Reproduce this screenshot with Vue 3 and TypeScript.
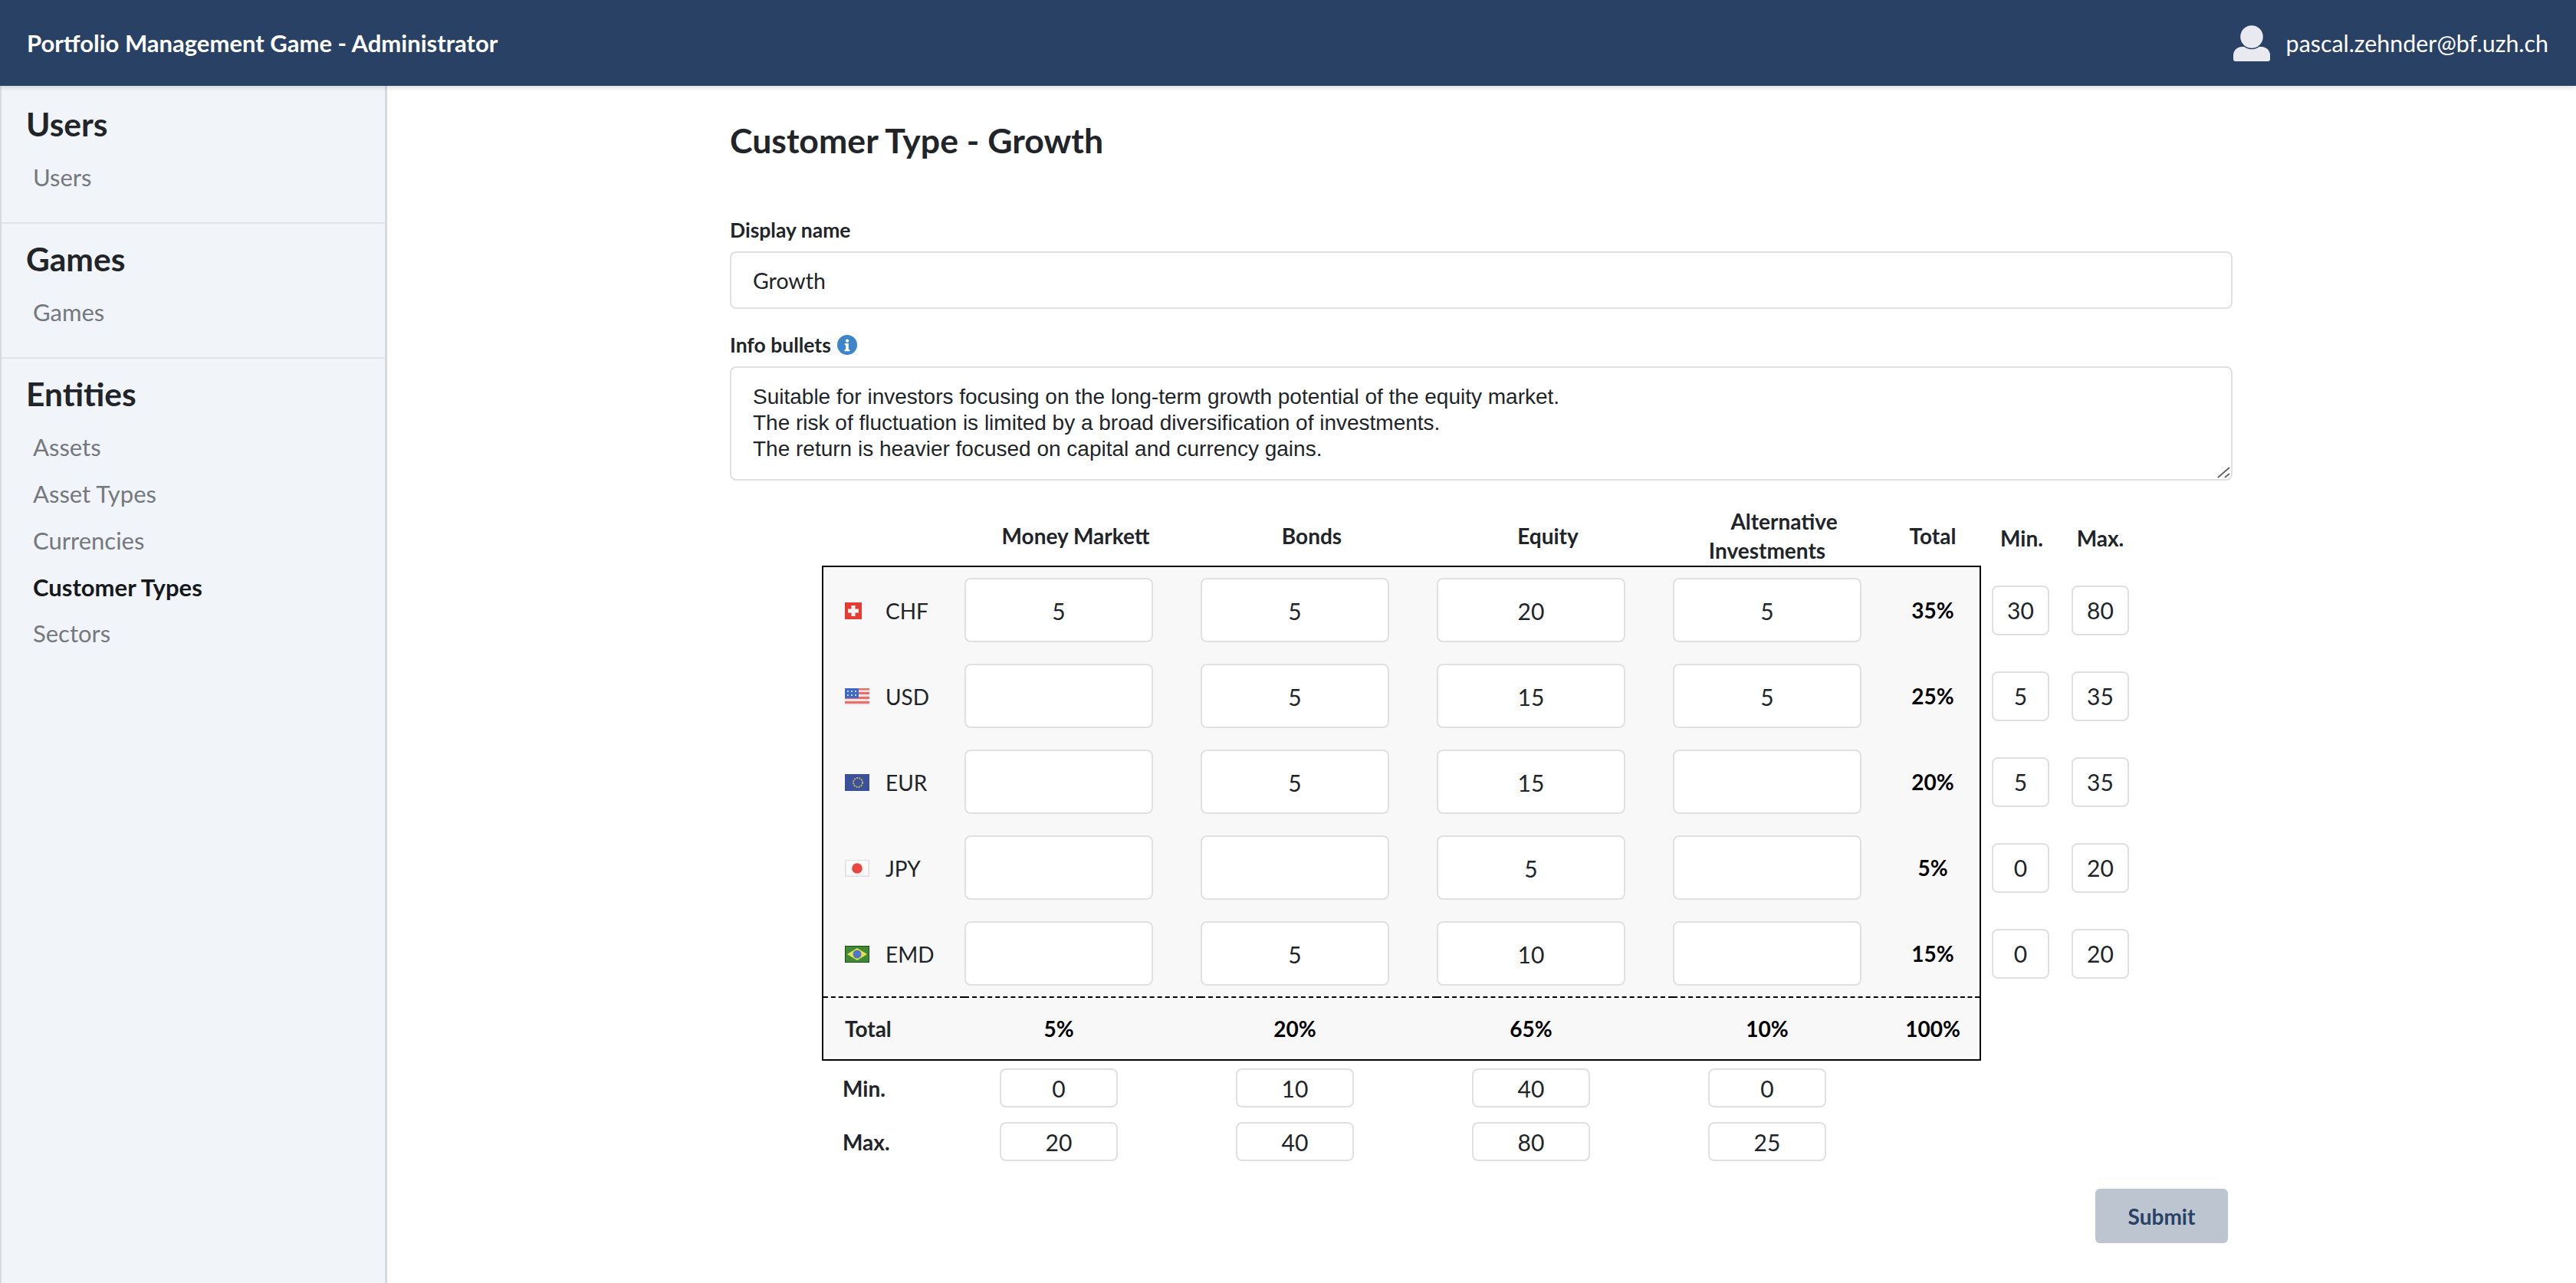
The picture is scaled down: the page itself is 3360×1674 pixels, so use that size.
<template>
  <div class="page">
    <header class="topbar">
      <div class="brand">Portfolio Management Game - Administrator</div>
      <div class="account">
        <svg class="user-icon" viewBox="0 0 48 48">
          <path d="M11 29h26c6 0 11 5 11 11v5a3 3 0 0 1-3 3H3a3 3 0 0 1-3-3v-5c0-6 5-11 11-11z" fill="#e8eaef" />
          <circle cx="24" cy="16" r="15.5" fill="#e8eaef" stroke="#284165" stroke-width="1.5" />
        </svg>
        <span>pascal.zehnder@bf.uzh.ch</span>
      </div>
    </header>

    <div class="body">
      <aside class="sidebar">
        <section v-for="group in nav" :key="group.title" class="nav-group">
          <h3>{{ group.title }}</h3>
          <a v-for="item in group.items" :key="item" :class="['nav-item', { active: item === 'Customer Types' }]">{{ item }}</a>
        </section>
      </aside>

      <main class="main">
        <form class="form" @submit.prevent>
          <h2 class="title">Customer Type - Growth</h2>

          <label class="field-label">Display name</label>
          <input class="text-input" type="text" value="Growth" />

          <label class="field-label second">
            Info bullets
            <svg class="info-icon" viewBox="0 0 26 26">
              <circle cx="13" cy="13" r="13" fill="#3d85cb" />
              <circle cx="13" cy="7.6" r="2.2" fill="#fff" />
              <path d="M9.800 11h5v8h1.600v2.200H9.600V19h1.600v-5.800H9.800z" fill="#fff" />
            </svg>
          </label>
          <div class="bullets-wrap">
            <textarea class="bullets" :value="bullets" rows="3"></textarea>
            <svg class="grip" width="20" height="20" viewBox="0 0 20 20">
              <path d="M3 18L18 5M12 18l6-5" stroke="#666" stroke-width="2" fill="none" />
            </svg>
          </div>

          <div class="matrix">
            <div class="matrix-head">
              <div></div>
              <div v-for="col in columns" :key="col" class="head-cell">{{ col }}</div>
              <div class="head-cell alt">
                <span>Alternative</span>
                <span class="alt-second">Investments</span>
              </div>
              <div class="head-cell">Total</div>
              <div class="head-cell min-head">Min.</div>
              <div class="head-cell max-head">Max.</div>
            </div>

            <div class="matrix-body">
              <div class="box">
                <div v-for="row in rows" :key="row.code" class="box-row">
                  <div class="currency">
                    <span class="flag-slot">
                      <svg v-if="row.code === 'CHF'" class="flag" width="22" height="22" viewBox="0 0 22 22">
                        <rect width="22" height="22" fill="#e53b35" />
                        <path d="M8.500 4h5v4.500H18v5h-4.500V18h-5v-4.500H4v-5h4.500z" fill="#fbf3f2" />
                      </svg>
                      <svg v-else-if="row.code === 'USD'" class="flag" width="32" height="22" viewBox="0 0 32 22">
                        <rect width="32" height="22" fill="#f4e4e2" />
                        <path d="M0 0h32v2.500H0zM0 5h32v3H0zM0 11h32v3H0zM0 17h32v3H0z" fill="#e8706c" />
                        <rect width="18" height="13" fill="#3f68c8" />
                        <path d="M3 3h2v2H3zM8 3h2v2H8zM13 3h2v2h-2zM3 8h2v2H3zM8 8h2v2H8zM13 8h2v2h-2z" fill="#c9d8f2" />
                      </svg>
                      <svg v-else-if="row.code === 'EUR'" class="flag" width="32" height="22" viewBox="0 0 32 22">
                        <rect width="32" height="22" fill="#3b5199" />
                        <circle cx="17" cy="11" r="6" fill="none" stroke="#c9b45c" stroke-width="2" stroke-dasharray="2 1.2" />
                      </svg>
                      <svg v-else-if="row.code === 'JPY'" class="flag" width="32" height="22" viewBox="0 0 32 22">
                        <rect width="32" height="22" fill="#dedede" />
                        <rect x="1.500" y="1" width="29" height="19.500" fill="#fbf9f9" />
                        <circle cx="16" cy="11" r="6.800" fill="#ea4541" />
                      </svg>
                      <svg v-else class="flag" width="32" height="22" viewBox="0 0 32 22">
                        <rect width="32" height="22" fill="#1d4d17" />
                        <rect x="1" y="1" width="30" height="20" fill="#3f8a36" />
                        <path d="M16 3l13 8-13 8-13-8z" fill="#e9de4e" />
                        <circle cx="16" cy="11" r="5.500" fill="#4d76c9" />
                      </svg>
                    </span>
                    {{ row.code }}
                  </div>
                  <div v-for="(val, i) in row.values" :key="i">
                    <input class="cell-input" type="text" :value="val" />
                  </div>
                  <div class="sum">{{ row.total }}</div>
                </div>
                <div class="box-row total-row">
                  <div class="total-label">Total</div>
                  <div v-for="t in colTotals" :key="t" class="col-total">{{ t }}</div>
                  <div class="grand-total">100%</div>
                </div>
              </div>

              <div class="limits">
                <div v-for="row in rows" :key="row.code" class="limit-row">
                  <input class="limit-input" type="text" :value="row.min" />
                  <input class="limit-input" type="text" :value="row.max" />
                </div>
              </div>
            </div>

            <div v-for="b in bounds" :key="b.label" class="bound-row">
              <div class="bound-label">{{ b.label }}</div>
              <div v-for="(v, i) in b.values" :key="i">
                <input class="bound-input" type="text" :value="v" />
              </div>
            </div>
          </div>

          <div class="actions">
            <button class="submit" type="submit">Submit</button>
          </div>
        </form>
      </main>
    </div>
  </div>
</template>

<script setup lang="ts">
interface Row {
  code: string;
  values: string[];
  total: string;
  min: string;
  max: string;
}

const nav = [
  { title: 'Users', items: ['Users'] },
  { title: 'Games', items: ['Games'] },
  { title: 'Entities', items: ['Assets', 'Asset Types', 'Currencies', 'Customer Types', 'Sectors'] },
];

const bullets = [
  'Suitable for investors focusing on the long-term growth potential of the equity market.',
  'The risk of fluctuation is limited by a broad diversification of investments.',
  'The return is heavier focused on capital and currency gains.',
].join('\n');

const columns = ['Money Markett', 'Bonds', 'Equity'];

const rows: Row[] = [
  { code: 'CHF', values: ['5', '5', '20', '5'], total: '35%', min: '30', max: '80' },
  { code: 'USD', values: ['', '5', '15', '5'], total: '25%', min: '5', max: '35' },
  { code: 'EUR', values: ['', '5', '15', ''], total: '20%', min: '5', max: '35' },
  { code: 'JPY', values: ['', '', '5', ''], total: '5%', min: '0', max: '20' },
  { code: 'EMD', values: ['', '5', '10', ''], total: '15%', min: '0', max: '20' },
];

const colTotals = ['5%', '20%', '65%', '10%'];

const bounds = [
  { label: 'Min.', values: ['0', '10', '40', '0'] },
  { label: 'Max.', values: ['20', '40', '80', '25'] },
];
</script>

<style>
html,
body {
  margin: 0;
  background: #fff;
}
</style>

<style scoped>
.page {
  height: 1674px;
  display: flex;
  flex-direction: column;
  overflow: hidden;
  font-family: Lato, "Open Sans", sans-serif;
  font-size: 28px;
  color: #212529;
}

.topbar {
  height: 112px;
  flex: none;
  display: flex;
  align-items: center;
  justify-content: space-between;
  padding: 0 36px 0 35px;
  background: #284165;
  color: #fff;
  box-shadow: 0 2px 6px rgba(0, 0, 0, 0.15);
  position: relative;
  z-index: 1;
}

.brand {
  font-size: 31px;
  font-weight: 700;
}

.account {
  display: flex;
  align-items: center;
  gap: 21px;
  font-size: 30.4px;
}

.user-icon {
  width: 48px;
  height: 48px;
}

.body {
  flex: 1;
  display: flex;
  min-height: 0;
}

.sidebar {
  width: 505px;
  flex: none;
  box-sizing: border-box;
  background: #f1f4f9;
  border-left: 2px solid #d5d9e0;
  border-right: 3px solid #d5d9e0;
}

.nav-group {
  padding: 22px 0 28.5px 32px;
  border-bottom: 2px solid #dfe3ea;
}

.nav-group:first-child {
  padding-top: 26px;
}

.nav-group:last-child {
  border-bottom: 0;
}

.nav-group h3 {
  margin: 0 0 15px;
  font-size: 42.5px;
  line-height: 48px;
  font-weight: 700;
}

.nav-item {
  display: block;
  margin-left: 9px;
  font-size: 31px;
  line-height: 60.7px;
  color: #75797e;
}

.nav-item.active {
  color: #16191c;
  font-weight: 700;
}

.main {
  flex: 1;
  padding-left: 447px;
}

.form {
  width: 1960px;
}

.title {
  margin: 43px 0 72px;
  font-size: 44.6px;
  line-height: 56px;
  font-weight: 700;
}

.field-label {
  display: flex;
  align-items: center;
  gap: 8px;
  height: 34px;
  margin-bottom: 11px;
  font-size: 26.5px;
  font-weight: 700;
}

.field-label.second {
  margin-top: 30px;
}

.info-icon {
  width: 26px;
  height: 26px;
}

.text-input {
  display: block;
  width: 100%;
  height: 75px;
  box-sizing: border-box;
  padding: 0 28px;
  border: 2px solid #e0e0e0;
  border-radius: 8px;
  font: inherit;
  font-size: 28.5px;
  color: #212529;
}

.bullets-wrap {
  position: relative;
}

.bullets {
  display: block;
  width: 100%;
  height: 149px;
  box-sizing: border-box;
  padding: 21px 28px;
  border: 2px solid #e0e0e0;
  border-radius: 8px;
  resize: none;
  font-family: "Liberation Sans", Arial, sans-serif;
  font-size: 28px;
  line-height: 34px;
  color: #212529;
}

.grip {
  position: absolute;
  right: 2px;
  bottom: 2px;
  pointer-events: none;
}

.matrix {
  margin-top: 34px;
  margin-left: 120px;
}

.matrix-head {
  height: 77px;
  display: grid;
  grid-template-columns: 177px 308px 308px 308px 308px 80px 112px 104px;
  align-items: center;
  font-weight: 700;
}

.head-cell {
  padding-bottom: 6px;
  text-align: center;
  line-height: 38px;
}

.alt span {
  display: block;
}

.alt .alt-second {
  padding-right: 44px;
}

.min-head {
  padding-bottom: 0;
  padding-left: 40px;
}

.max-head {
  padding-bottom: 0;
  padding-left: 29px;
}

.matrix-body {
  display: flex;
  align-items: flex-start;
}

.box {
  width: 1512px;
  flex: none;
  box-sizing: border-box;
  border: 2px solid #000;
  background: #f8f8f8;
}

.box-row {
  height: 112px;
  display: grid;
  grid-template-columns: 184px 308px 308px 308px 308px 92px;
  align-items: center;
}

.currency {
  display: flex;
  align-items: center;
  padding-top: 2px;
  padding-left: 28px;
}

.flag-slot {
  width: 53px;
  flex: none;
  display: flex;
}

.flag {
  filter: blur(0.5px);
}

.cell-input {
  display: block;
  width: 246px;
  height: 84px;
  box-sizing: border-box;
  padding-top: 2px;
  border: 2px solid #e0e0e0;
  border-radius: 8px;
  background: #fff;
  text-align: center;
  font: inherit;
  font-size: 30px;
  color: #212529;
}

.sum {
  padding-right: 30px;
  text-align: center;
  font-weight: 700;
  color: #000;
}

.total-row {
  height: 82px;
  align-items: stretch;
  font-weight: 700;
}

.total-row > div {
  display: flex;
  align-items: center;
  border-top: 2px dashed #000;
}

.total-label {
  padding-left: 28px;
}

.col-total {
  justify-content: center;
  padding-right: 62px;
  color: #000;
}

.grand-total {
  justify-content: center;
  padding-right: 30px;
  color: #000;
}

.limits {
  margin-top: 2px;
  margin-left: 14px;
}

.limit-row {
  height: 112px;
  display: flex;
  align-items: center;
  gap: 29px;
}

.limit-input {
  width: 75px;
  height: 65px;
  box-sizing: border-box;
  padding: 0;
  border: 2px solid #e0e0e0;
  border-radius: 8px;
  background: #fff;
  text-align: center;
  font: inherit;
  font-size: 30px;
  color: #212529;
}

.bound-row {
  height: 51px;
  margin-top: 10px;
  margin-bottom: 19px;
  display: grid;
  grid-template-columns: 186px 308px 308px 308px 308px;
  align-items: center;
}

.bound-row + .bound-row {
  margin-top: 0;
}

.bound-label {
  padding-left: 27px;
  font-weight: 700;
}

.bound-input {
  display: block;
  width: 154px;
  height: 51px;
  margin-left: 46px;
  box-sizing: border-box;
  border: 2px solid #e0e0e0;
  border-radius: 8px;
  background: #fff;
  text-align: center;
  font: inherit;
  font-size: 30px;
  color: #212529;
}

.actions {
  display: flex;
  justify-content: flex-end;
  margin-top: 36px;
  margin-right: 6px;
}

.submit {
  width: 173px;
  height: 71px;
  border: 0;
  border-radius: 6px;
  background: #bdc5d1;
  color: #284165;
  font: inherit;
  font-weight: 700;
}
</style>
